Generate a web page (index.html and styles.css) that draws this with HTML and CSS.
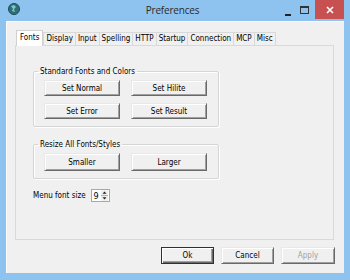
FILE: index.html
```html
<!DOCTYPE html>
<html lang="en">
<head>
	<meta charset="UTF-8">
	<title>Preferences</title>
	<link rel="stylesheet" href="styles.css">
</head>
<body>
	<div class="window">
		<div class="titlebar">
			<svg class="appicon" width="12" height="12" viewBox="0 0 12 12">
				<circle cx="6" cy="6" r="5.5" fill="#2f6f7a"/>
				<path d="M3 3 L6 2 L8 4 L6 6 L7 9 L4 8 L5 6 Z" fill="#7fc6c9"/>
				<circle cx="6" cy="6" r="5.5" fill="none" stroke="#1d4b55" stroke-width="1"/>
			</svg>
			<span class="title">Preferences</span>
			<div class="controls">
				<span class="ctl minimize"><svg width="8" height="8" viewBox="0 0 8 8"><rect x="1" y="6" width="6" height="2" fill="#222"/></svg></span>
				<span class="ctl maximize"><svg width="9" height="8" viewBox="0 0 9 8"><rect x="0.5" y="0.5" width="8" height="7" fill="none" stroke="#333"/><rect x="0.5" y="0.5" width="8" height="1.5" fill="#333"/></svg></span>
				<span class="ctl close"><svg width="8" height="8" viewBox="0 0 8 8"><path d="M1 1 L7 7 M7 1 L1 7" stroke="#fff" stroke-width="1.6"/></svg></span>
			</div>
		</div>

		<div class="client">
			<div class="tabs">
				<span class="tab active">Fonts</span>
				<span class="tab">Display</span>
				<span class="tab">Input</span>
				<span class="tab">Spelling</span>
				<span class="tab">HTTP</span>
				<span class="tab">Startup</span>
				<span class="tab">Connection</span>
				<span class="tab">MCP</span>
				<span class="tab">Misc</span>
			</div>
			<div class="panel">
				<fieldset class="group">
					<legend>Standard Fonts and Colors</legend>
					<div class="btnrow">
						<button class="btn">Set Normal</button>
						<button class="btn">Set Hilite</button>
					</div>
					<div class="btnrow">
						<button class="btn">Set Error</button>
						<button class="btn">Set Result</button>
					</div>
				</fieldset>
				<fieldset class="group second">
					<legend>Resize All Fonts/Styles</legend>
					<div class="btnrow">
						<button class="btn">Smaller</button>
						<button class="btn">Larger</button>
					</div>
				</fieldset>
				<div class="sizerow">
					<span>Menu font size</span>
					<div class="spinner">
						<span class="value">9</span>
						<span class="arrows">
							<svg width="7" height="11" viewBox="0 0 7 11">
								<rect x="0" y="0" width="7" height="11" fill="#f0f0f0"/>
								<line x1="0" y1="5.5" x2="7" y2="5.5" stroke="#b0b0b0"/>
								<path d="M3.5 1.5 L5.5 3.8 L1.5 3.8 Z" fill="#222"/>
								<path d="M3.5 9.5 L5.5 7.2 L1.5 7.2 Z" fill="#222"/>
							</svg>
						</span>
					</div>
				</div>
			</div>
			<div class="footer">
				<button class="btn default">Ok</button>
				<button class="btn">Cancel</button>
				<button class="btn" disabled>Apply</button>
			</div>
		</div>
	</div>
</body>
</html>
```

FILE: styles.css
```css
* {
	box-sizing: border-box;
}
body {
	margin: 0;
	background-color: #8fc3ef;
	font-family: 'DejaVu Sans Condensed', 'DejaVu Sans', sans-serif;
	font-stretch: semi-condensed;
	font-size: 8px;
	color: #000;
}
.window {
	width: 350px;
	height: 280px;
	display: flex;
	flex-direction: column;
}
.titlebar {
	height: 21px;
	flex: none;
	display: flex;
	align-items: center;
}
.appicon {
	margin-left: 8px;
	margin-top: -3px;
}
.title {
	flex: 1;
	text-align: center;
	font-family: 'Open Sans', 'Noto Sans', sans-serif;
	font-stretch: normal;
	font-size: 10px;
	letter-spacing: -0.2px;
	color: #2b2b2b;
	padding-left: 46px;
	margin-top: -2px;
}
.controls {
	display: flex;
	align-self: flex-start;
	height: 19px;
}
.ctl {
	display: flex;
	align-items: center;
	justify-content: center;
	width: 17px;
}
.minimize svg {
	margin-top: 4px;
}
.maximize {
	margin-right: 2px;
}
.close {
	width: 29px;
	margin-right: 6px;
	background-color: #c75050;
}
.client {
	flex: 1;
	margin: 0 6px 7px 6px;
	background-color: #f0f0f0;
	border-top: 1px solid #fbfbfb;
	border-left: 1px solid #fbfbfb;
	padding: 8px 9px 9px 8px;
	display: flex;
	flex-direction: column;
}
.tabs {
	display: flex;
	align-items: flex-end;
	height: 15px;
	flex: none;
	padding-left: 1px;
	position: relative;
	z-index: 1;
}
.tab {
	height: 13px;
	line-height: 12px;
	padding: 0 2px;
	border: 1px solid #d9d9d9;
	border-bottom: none;
	margin-right: -1px;
	background-color: #f0f0f0;
	white-space: nowrap;
}
.tab.active {
	height: 16px;
	line-height: 14px;
	padding: 0 3px;
	margin-bottom: -1px;
	background-color: #fff;
	border-color: #d0d0d0;
	margin-right: 0;
}
.panel {
	height: 195px;
	flex: none;
	border: 1px solid #d9d9d9;
	margin-right: 1px;
	padding: 20px 0 0 17px;
	display: flex;
	flex-direction: column;
	align-items: flex-start;
}
.group {
	margin: 0;
	width: 186px;
	padding: 3px 10px 7px 10px;
	border: 1px solid #d5d5d5;
	border-radius: 2px;
	box-shadow: inset 1px 1px #fff, 1px 1px #fff;
	display: flex;
	flex-direction: column;
	gap: 7px;
}
.group legend {
	padding: 0 2px;
	margin-left: -6px;
	line-height: 11px;
}
.group.second {
	margin-top: 12px;
	padding-top: 3px;
	padding-bottom: 7px;
}
.group.second .btn {
	height: 18px;
}
.btnrow {
	display: flex;
	gap: 11px;
}
.btn {
	width: 76px;
	height: 16px;
	padding: 0;
	font: inherit;
	color: #000;
	background-color: #f0f0f0;
	border: 1px solid;
	border-color: #e8e8e8 #696969 #696969 #e8e8e8;
	box-shadow: inset 1px 1px #fff, inset -1px -1px #a0a0a0;
}
.btn:disabled {
	color: #a0a0a0;
}
.sizerow {
	margin-top: 10px;
	display: flex;
	align-items: center;
	gap: 5px;
}
.spinner {
	width: 19px;
	height: 13px;
	border: 1px solid #a8a8a8;
	background-color: #fff;
	display: flex;
	align-items: center;
	justify-content: space-between;
}
.spinner .value {
	padding-left: 2px;
	font-size: 9px;
}
.spinner .arrows {
	display: flex;
	margin-right: 1px;
}
.footer {
	margin-top: 7px;
	display: flex;
	justify-content: flex-end;
	gap: 7px;
}
.footer .btn {
	width: 53px;
	height: 17px;
}
.footer .btn:last-child {
	width: 54px;
}
.footer .btn.default {
	border: 1px solid #303030;
	box-shadow: inset 1px 1px #fff, inset -1px -1px #696969, inset -2px -2px #a0a0a0;
}
```
